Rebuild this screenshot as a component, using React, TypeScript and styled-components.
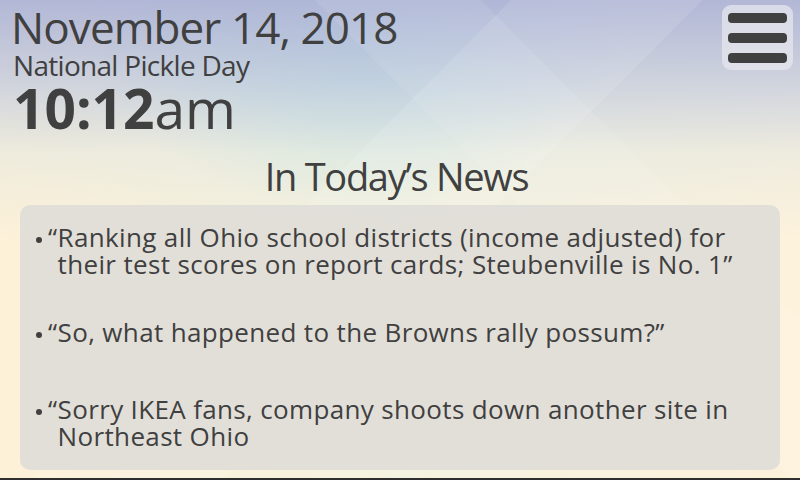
import React from "react";
import styled, { createGlobalStyle } from "styled-components";

const GlobalStyle = createGlobalStyle`
  html, body {
    margin: 0;
    padding: 0;
    width: 800px;
    height: 480px;
    overflow: hidden;
  }
  body {
    font-family: "Open Sans", "Noto Sans", sans-serif;
    color: #404040;
  }
`;

const Screen = styled.div`
  position: relative;
  width: 800px;
  height: 480px;
  box-sizing: border-box;
  border-bottom: 2px solid #2e2e2e;
  display: flex;
  flex-direction: column;
  overflow: hidden;
  background:
    linear-gradient(135deg, rgba(255, 255, 255, 0) 0 40%, rgba(255, 255, 255, 0.1) 40% 55%, rgba(255, 255, 255, 0) 55%),
    linear-gradient(45deg, rgba(255, 255, 255, 0) 0 62%, rgba(255, 255, 255, 0.08) 62% 75%, rgba(255, 255, 255, 0) 75%),
    linear-gradient(180deg, rgba(174, 180, 214, 0.95) 0%, rgba(190, 200, 222, 0.7) 18%, rgba(220, 228, 226, 0.45) 32%, rgba(253, 243, 220, 0) 50%),
    radial-gradient(ellipse 280px 210px at 45% 0%, rgba(176, 228, 228, 0.95) 0%, rgba(176, 228, 228, 0) 100%),
    linear-gradient(90deg, #fdf1d8 0%, #f4f2e0 50%, #fdf2dc 100%);
`;

const Header = styled.header`
  display: flex;
  justify-content: space-between;
  align-items: flex-start;
  padding: 0 7px 0 11px;
`;

const DateBlock = styled.div`
  display: flex;
  flex-direction: column;
  padding-top: 5px;
`;

const DateLine = styled.div`
  font-size: 44px;
  line-height: 44px;
  letter-spacing: -0.9px;
  white-space: nowrap;
`;

const Holiday = styled.div`
  font-size: 28px;
  line-height: 28px;
  letter-spacing: -0.7px;
  margin-top: 2px;
  padding-left: 2px;
  white-space: nowrap;
`;

const Clock = styled.div`
  font-size: 55px;
  line-height: 55px;
  letter-spacing: 0;
  margin-top: 1px;
  padding-left: 2px;
  white-space: nowrap;
`;

const ClockDigits = styled.span`
  font-weight: 700;
`;

const MenuButton = styled.button`
  width: 71px;
  height: 65px;
  margin-top: 5px;
  border: none;
  border-radius: 9px;
  background: rgba(232, 232, 238, 0.72);
  display: flex;
  flex-direction: column;
  justify-content: center;
  align-items: center;
  gap: 10px;
  padding: 0;
  cursor: pointer;
`;

const MenuBar = styled.span`
  display: block;
  width: 59px;
  height: 10px;
  border-radius: 4px;
  background: #404040;
`;

const Heading = styled.h2`
  margin: 22px 7px 0 0;
  font-size: 38px;
  line-height: 38px;
  font-weight: 400;
  letter-spacing: -1.3px;
  text-align: center;
`;

const NewsPanel = styled.ul`
  list-style: none;
  margin: 10px 20px 0;
  padding: 19px 20px 20px 16px;
  height: 265px;
  box-sizing: border-box;
  border-radius: 10px;
  background: rgba(224, 221, 216, 0.92);
`;

const NewsItem = styled.li<{ $gap: number }>`
  display: grid;
  grid-template-columns: 6px auto 1fr;
  margin-top: ${(p) => p.$gap}px;
  font-size: 26px;
  line-height: 27px;
  letter-spacing: 0.35px;
`;

const Bullet = styled.span`
  width: 6px;
  height: 6px;
  margin-top: 13px;
  border-radius: 50%;
  background: #404040;
`;

const Quote = styled.span`
  margin-left: 6px;
  letter-spacing: 0.5px;
`;

const Headline = styled.span``;

const news = [
  {
    gap: 0,
    text: "Ranking all Ohio school districts (income adjusted) for their test scores on report cards; Steubenville is No. 1\u201D",
  },
  { gap: 41, text: "So, what happened to the Browns rally possum?\u201D" },
  { gap: 50, text: "Sorry IKEA fans, company shoots down another site in Northeast Ohio" },
];

export default function App() {
  return (
    <>
      <GlobalStyle />
      <Screen>
        <Header>
          <DateBlock>
            <DateLine>November 14, 2018</DateLine>
            <Holiday>National Pickle Day</Holiday>
            <Clock>
              <ClockDigits>10:12</ClockDigits>am
            </Clock>
          </DateBlock>
          <MenuButton aria-label="Menu">
            <MenuBar />
            <MenuBar />
            <MenuBar />
          </MenuButton>
        </Header>
        <Heading>In Today’s News</Heading>
        <NewsPanel>
          {news.map((n, i) => (
            <NewsItem key={i} $gap={n.gap}>
              <Bullet />
              <Quote>“</Quote>
              <Headline>{n.text}</Headline>
            </NewsItem>
          ))}
        </NewsPanel>
      </Screen>
    </>
  );
}
